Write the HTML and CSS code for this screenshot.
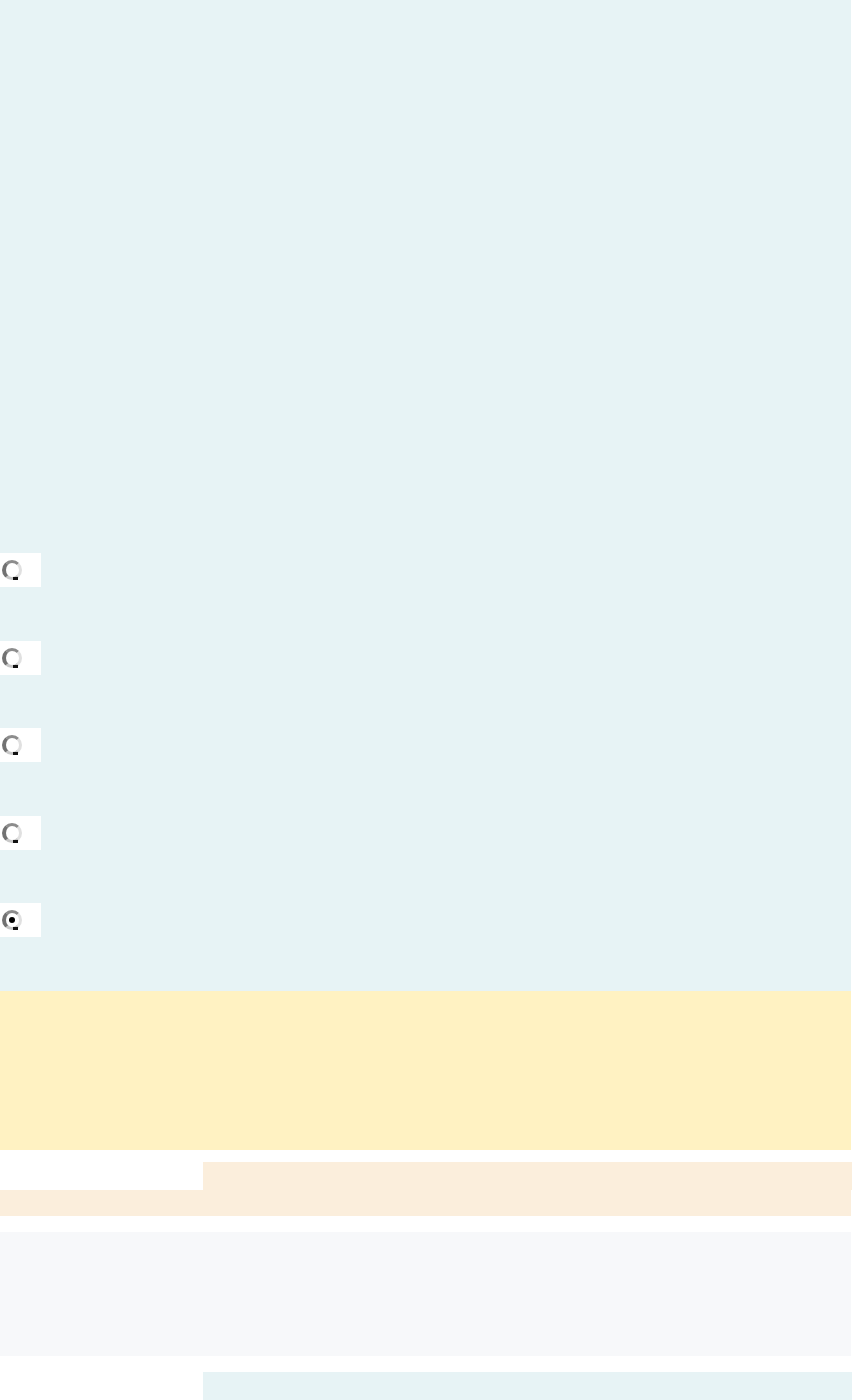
FILE: index.html
```html
<!DOCTYPE html>
<html lang="en">
<head>
    <meta charset="UTF-8">
    <meta name="viewport" content="width=device-width, initial-scale=1.0">
    <title>Quiz</title>
    <link rel="stylesheet" href="styles.css">
</head>
<body>
    <div class="page">
        <div class="quiz">
            <div class="quiz-intro"></div>
            <div class="options">
                <label class="option"><input type="radio" name="answer" class="radio"></label>
                <label class="option"><input type="radio" name="answer" class="radio"></label>
                <label class="option"><input type="radio" name="answer" class="radio"></label>
                <label class="option"><input type="radio" name="answer" class="radio"></label>
                <label class="option"><input type="radio" name="answer" class="radio" checked></label>
            </div>
        </div>

        <div class="hint"></div>

        <div class="note">
            <div class="note-indent"></div>
            <div class="note-first"></div>
            <div class="note-rest"></div>
        </div>

        <div class="explain"></div>

        <div class="next">
            <div class="next-indent"></div>
            <div class="next-body"></div>
        </div>
    </div>
</body>
</html>
```

FILE: styles.css
```css
* {
    margin: 0;
    padding: 0;
    box-sizing: border-box;
}

body {
    font-family: 'Liberation Sans', Arial, sans-serif;
    background: #ffffff;
    overflow: hidden;
}

.page {
    width: 851px;
    display: flex;
    flex-direction: column;
}

.quiz {
    background: #e7f3f5;
    padding-bottom: 54px;
}

.quiz-intro {
    height: 553px;
}

.options {
    display: flex;
    flex-direction: column;
    gap: 53.5px;
}

.option {
    width: 41px;
    height: 34px;
    background: #ffffff;
    display: flex;
    align-items: center;
    padding-left: 2px;
}

.radio {
    appearance: none;
    -webkit-appearance: none;
    width: 20px;
    height: 20px;
    border-radius: 50%;
    border: 3px solid #a9a9a9;
    border-left: 4px solid #727272;
    border-top-color: #8c8c8c;
    border-right-color: #e0e0e0;
    border-bottom-color: #c8c8c8;
    background: #ffffff;
    position: relative;
}

/* little dark notch at the bottom of the ring */
.radio::after {
    content: '';
    position: absolute;
    left: 7px;
    bottom: -3px;
    width: 5px;
    height: 3px;
    background: #111;
}

.radio:checked::before {
    content: '';
    position: absolute;
    top: 4px;
    left: 3px;
    width: 6px;
    height: 6px;
    border-radius: 50%;
    background: #000;
}

.hint {
    background: #fff2c2;
    height: 159px;
}

.note {
    display: grid;
    grid-template-columns: 203px 1fr;
    margin-top: 12px;
}

.note-first {
    background: #fbeedc;
    height: 28px;
    margin-right: -1px;
}

.note-rest {
    grid-column: 1 / -1;
    background: #fbeedc;
    height: 26px;
}

.explain {
    background: #f7f8fa;
    height: 124px;
    margin-top: 16px;
}

.next {
    display: grid;
    grid-template-columns: 203px 1fr;
    margin-top: 16px;
}

.next-body {
    background: #e7f3f5;
    height: 60px;
    margin-right: -1px;
}
```
